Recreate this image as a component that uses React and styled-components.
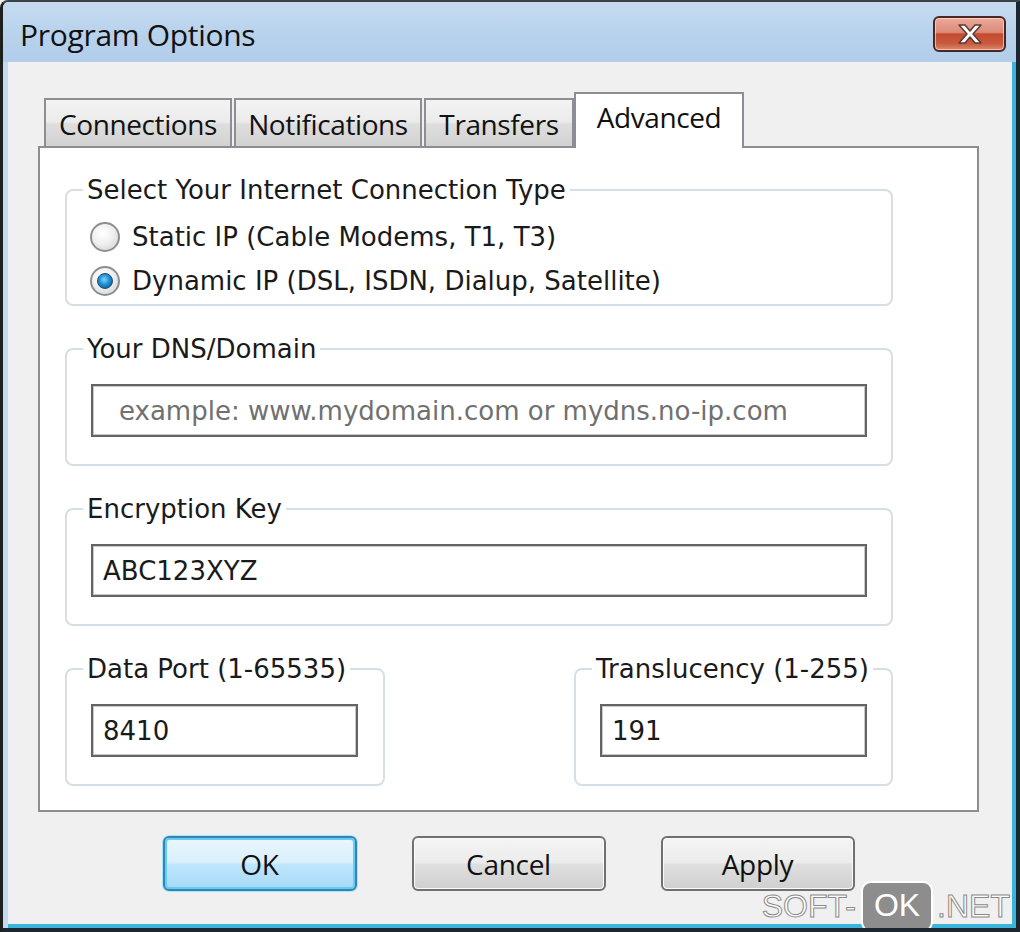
import React from "react";
import styled, { createGlobalStyle } from "styled-components";

const GlobalStyle = createGlobalStyle`
  html, body { margin: 0; padding: 0; background: #f0f0f0; }
  * { box-sizing: border-box; }
`;

const uiFont = `"Open Sans", "Noto Sans", sans-serif`;
const bodyFont = `"DejaVu Sans", "Noto Sans", sans-serif`;

const Window = styled.div`
  position: relative;
  width: 1020px;
  height: 932px;
  display: flex;
  flex-direction: column;
  background: #c4daef;
  border-top: 2px solid #3a3f44;
  border-left: 3px solid #1f1f1f;
  border-right: 4px solid #1b2630;
  border-bottom: 4px solid #1b2630;
  border-top-left-radius: 8px;
  overflow: hidden;
`;

const TitleBar = styled.div`
  height: 60px;
  flex: none;
  display: flex;
  align-items: center;
  justify-content: space-between;
  padding: 4px 10px 0 17px;
  background: linear-gradient(180deg, #c6dbf0 0%, #b8d2ec 55%, #b1cdea 100%);
`;

const Title = styled.div`
  font-family: ${uiFont};
  font-size: 30px;
  color: #111;
  letter-spacing: -0.3px;
`;

const CloseButton = styled.div`
  width: 73px;
  height: 36px;
  border-radius: 6px;
  border: 2px solid #4a2723;
  background: linear-gradient(180deg, #eba99a 0%, #dc8a77 45%, #c44a2e 50%, #c85a3e 80%, #d98b70 100%);
  box-shadow: inset 0 0 0 1px rgba(255, 220, 210, 0.7);
  display: flex;
  align-items: center;
  justify-content: center;
`;

const Client = styled.div`
  flex: 1;
  margin-left: 5px;
  background: #f0f0f0;
  border-right: 4px solid #3ab4da;
  border-bottom: 4px solid #3ab4da;
  padding: 30px 33px 0 30px;
  display: flex;
  flex-direction: column;
`;

const TabStrip = styled.div`
  display: flex;
  align-items: flex-end;
  padding-left: 6px;
  margin-bottom: -2px;
  position: relative;
  z-index: 1;
`;

const Tab = styled.div`
  width: ${(p) => p.$w}px;
  height: ${(p) => (p.$active ? 56 : 48)}px;
  margin-right: ${(p) => (p.$active ? 0 : 2)}px;
  margin-left: ${(p) => (p.$active ? -2 : 0)}px;
  margin-bottom: ${(p) => (p.$active ? 0 : 2)}px;
  border: 2px solid #8c8e94;
  border-bottom: none;
  background: ${(p) =>
    p.$active
      ? "#ffffff"
      : "linear-gradient(180deg, #f3f3f3 0%, #ebebeb 48%, #dedede 52%, #d2d2d2 100%)"};
  font-family: ${uiFont};
  font-size: 28px;
  color: #111;
  display: flex;
  justify-content: center;
  align-items: center;
  padding-top: ${(p) => (p.$active ? 0 : 2)}px;
  padding-bottom: ${(p) => (p.$active ? 8 : 0)}px;
  letter-spacing: -0.4px;
`;

const Panel = styled.div`
  background: #ffffff;
  border: 2px solid #8c8e94;
  padding: 27px 84px 24px 25px;
  display: flex;
  flex-direction: column;
  gap: 28px;
`;

const Group = styled.fieldset`
  margin: 0;
  padding: 0;
  min-width: 0;
  width: ${(p) => (p.$w ? `${p.$w}px` : "auto")};
  border: 2px solid #d6dfe6;
  border-radius: 8px;
`;

const Legend = styled.legend`
  margin-left: 16px;
  padding: 0 4px;
  font-family: ${bodyFont};
  font-size: 26px;
  line-height: 30px;
  color: #1a1a1a;
`;

const GroupBody = styled.div`
  padding: ${(p) => p.$pad};
  display: flex;
  flex-direction: column;
`;

const RadioRow = styled.label`
  height: 44px;
  display: flex;
  align-items: center;
  gap: 12px;
  font-family: ${bodyFont};
  font-size: 26px;
  color: #1a1a1a;
`;

const RadioCircle = styled.span`
  width: 30px;
  height: 30px;
  border-radius: 50%;
  border: 2px solid #8e8f8f;
  background: radial-gradient(circle at 40% 35%, #ffffff 0%, #f0f0f0 45%, #cfcfcf 100%);
  display: flex;
  align-items: center;
  justify-content: center;
  flex: none;
`;

const RadioDot = styled.span`
  width: 16px;
  height: 16px;
  border-radius: 50%;
  border: 1px solid #1c4a6e;
  background: radial-gradient(circle at 45% 40%, #7fd3ff 0%, #1e8fd2 45%, #0b4d86 100%);
`;

const TextInput = styled.input`
  width: 100%;
  height: 53px;
  border: 2px solid #646464;
  box-shadow: inset 0 0 0 1px #c9c9c9;
  outline: none;
  background: #fff;
  font-family: ${bodyFont};
  font-size: 26px;
  color: ${(p) => (p.$muted ? "#707070" : "#1a1a1a")};
  padding: 0 0 0 ${(p) => p.$indent}px;
`;

const Row = styled.div`
  display: flex;
  justify-content: space-between;
`;

const ButtonRow = styled.div`
  display: flex;
  justify-content: center;
  gap: 55px;
  margin-top: 24px;
`;

const Button = styled.div`
  width: 194px;
  height: 55px;
  border-radius: 6px;
  border: 2px solid ${(p) => (p.$default ? "#3c7fb1" : "#707070")};
  background: ${(p) =>
    p.$default
      ? "linear-gradient(180deg, #eaf6fd 0%, #d9f0fc 48%, #bee6fd 52%, #a7d9f5 100%)"
      : "linear-gradient(180deg, #f4f4f4 0%, #ececec 48%, #dfdfdf 52%, #d0d0d0 100%)"};
  box-shadow: ${(p) =>
    p.$default
      ? "inset 0 0 0 2px #5fd0f5, 0 0 0 1px #a8e4f8"
      : "inset 0 0 0 1px #fbfbfb"};
  display: flex;
  align-items: center;
  justify-content: center;
  font-family: ${uiFont};
  font-size: 28px;
  letter-spacing: -0.3px;
  color: #111;
`;

const Watermark = styled.div`
  position: absolute;
  right: 6px;
  bottom: -4px;
  display: flex;
  align-items: center;
  font-family: "Liberation Sans", Arial, sans-serif;
  font-size: 32px;
  color: #ffffff;
  -webkit-text-stroke: 1px #8a8a8a;
`;

const WatermarkBadge = styled.span`
  background: #8d8d8d;
  color: #ffffff;
  -webkit-text-stroke: 0;
  border: 2px solid #ffffff;
  border-radius: 10px;
  padding: 4px 11px 6px;
  margin: 0 4px 0 5px;
`;

const tabs = [
  { label: "Connections", w: 188 },
  { label: "Notifications", w: 188 },
  { label: "Transfers", w: 150 },
  { label: "Advanced", w: 170, active: true },
];

function CloseGlyph() {
  return (
    <svg width="34" height="24" viewBox="0 0 34 24">
      <path
        d="M6 3 L12 3 L17 9 L22 3 L28 3 L20 12 L28 21 L22 21 L17 15 L12 21 L6 21 L14 12 Z"
        fill="#ffffff"
        stroke="#5a3a36"
        strokeWidth="1.5"
        strokeLinejoin="round"
      />
    </svg>
  );
}

export default function App() {
  return (
    <>
      <GlobalStyle />
      <Window>
        <TitleBar>
          <Title>Program Options</Title>
          <CloseButton>
            <CloseGlyph />
          </CloseButton>
        </TitleBar>
        <Client>
          <TabStrip>
            {tabs.map((t) => (
              <Tab key={t.label} $w={t.w} $active={t.active}>
                {t.label}
              </Tab>
            ))}
          </TabStrip>
          <Panel>
            <Group>
              <Legend>Select Your Internet Connection Type</Legend>
              <GroupBody $pad="10px 23px 1px">
                <RadioRow>
                  <RadioCircle />
                  Static IP (Cable Modems, T1, T3)
                </RadioRow>
                <RadioRow>
                  <RadioCircle>
                    <RadioDot />
                  </RadioCircle>
                  Dynamic IP (DSL, ISDN, Dialup, Satellite)
                </RadioRow>
              </GroupBody>
            </Group>
            <Group>
              <Legend>Your DNS/Domain</Legend>
              <GroupBody $pad="20px 24px 27px">
                <TextInput
                  readOnly
                  $muted
                  $indent={26}
                  value="example: www.mydomain.com or mydns.no-ip.com"
                />
              </GroupBody>
            </Group>
            <Group>
              <Legend>Encryption Key</Legend>
              <GroupBody $pad="20px 24px 27px">
                <TextInput readOnly $indent={10} value="ABC123XYZ" />
              </GroupBody>
            </Group>
            <Row>
              <Group $w={320}>
                <Legend>Data Port (1-65535)</Legend>
                <GroupBody $pad="20px 25px 27px 24px">
                  <TextInput readOnly $indent={10} value="8410" />
                </GroupBody>
              </Group>
              <Group $w={319}>
                <Legend>Translucency (1-255)</Legend>
                <GroupBody $pad="20px 24px 27px 24px">
                  <TextInput readOnly $indent={10} value="191" />
                </GroupBody>
              </Group>
            </Row>
          </Panel>
          <ButtonRow>
            <Button $default>OK</Button>
            <Button>Cancel</Button>
            <Button>Apply</Button>
          </ButtonRow>
        </Client>
        <Watermark>
          SOFT-<WatermarkBadge>OK</WatermarkBadge>.NET
        </Watermark>
      </Window>
    </>
  );
}
